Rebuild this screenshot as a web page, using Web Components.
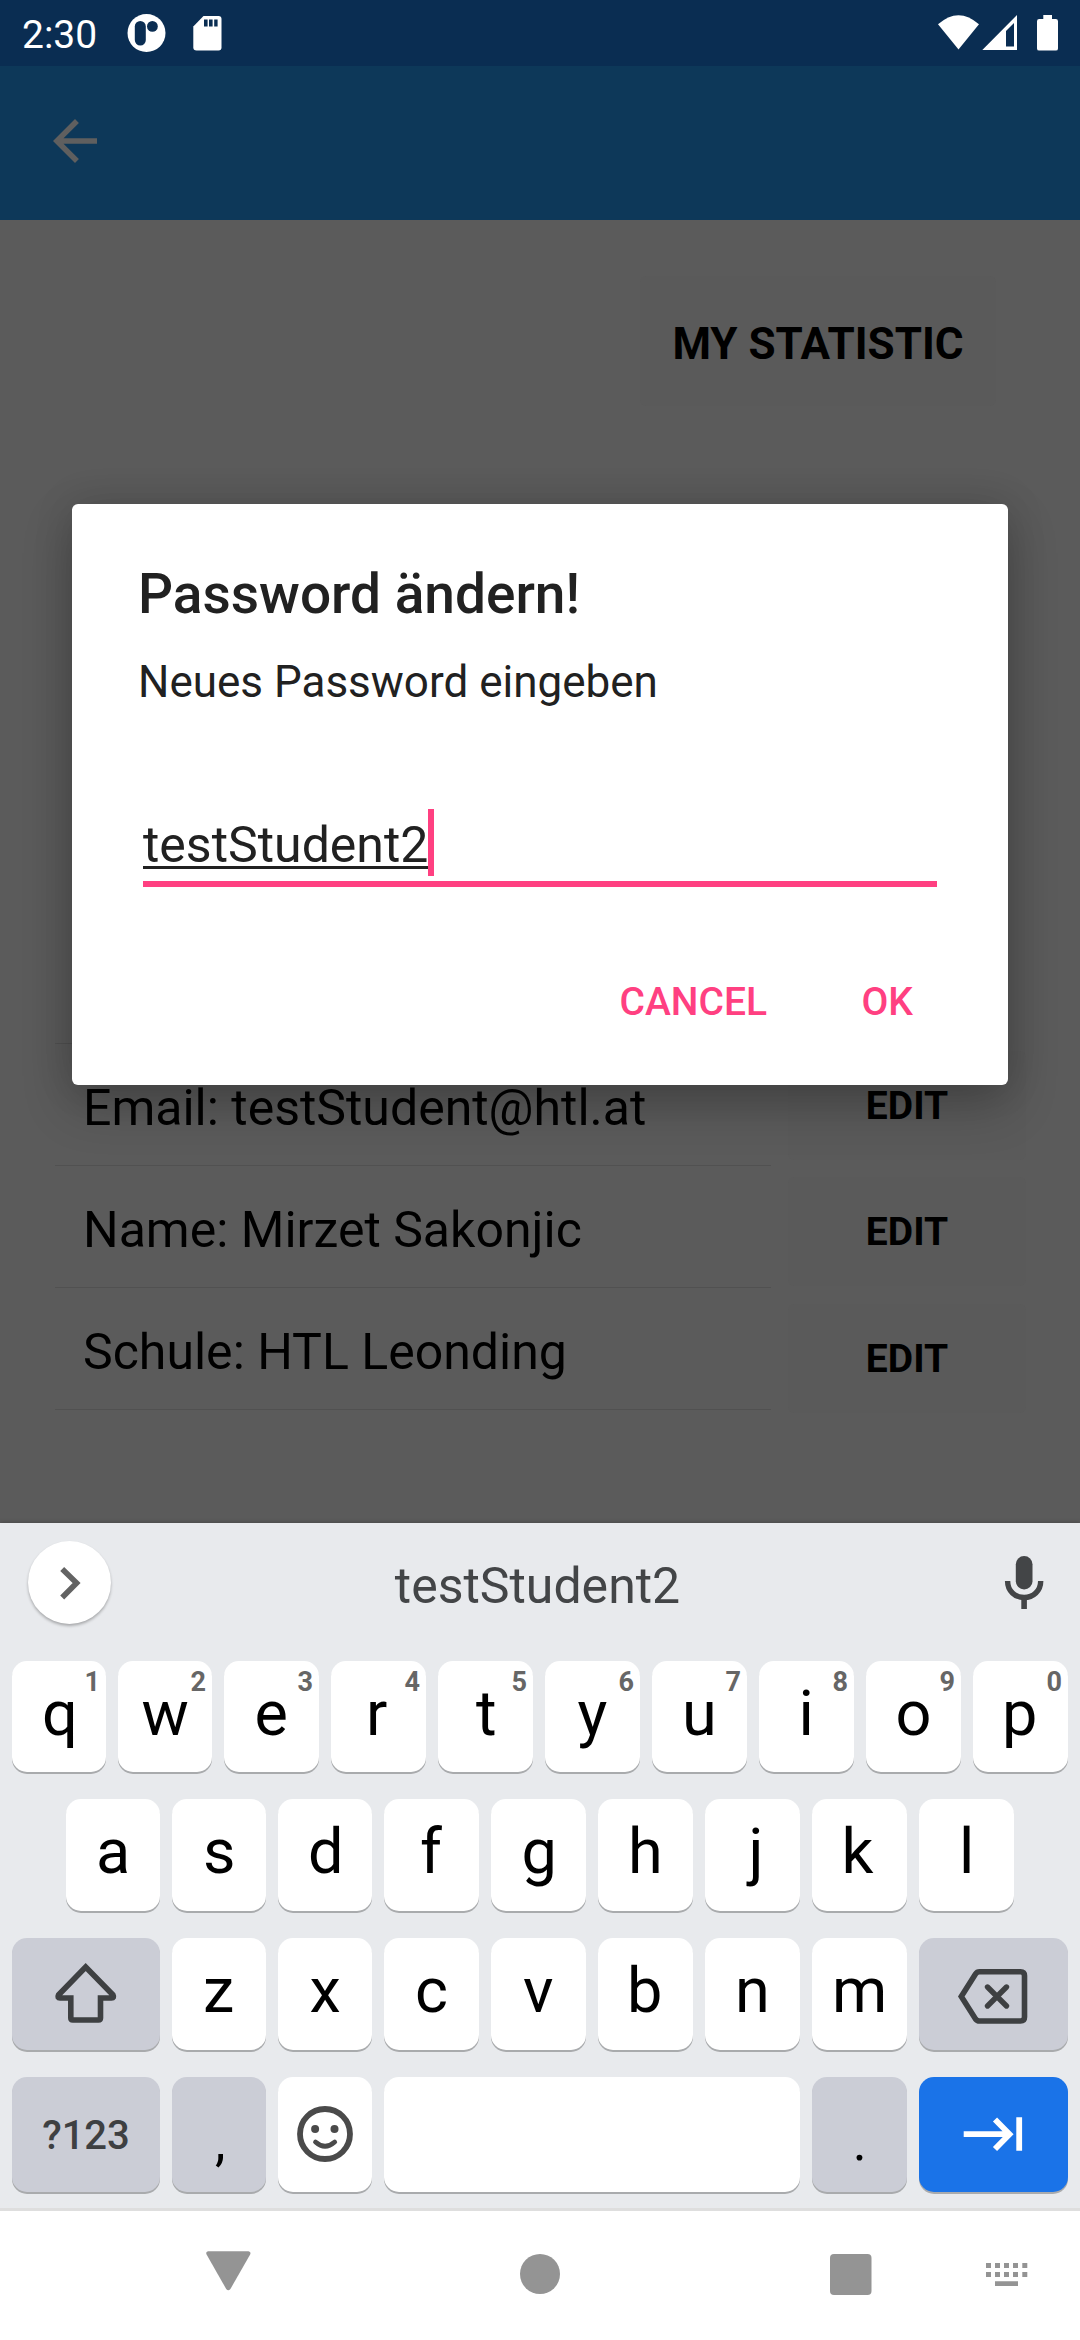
<!DOCTYPE html>
<html lang="de">
<head>
<meta charset="utf-8">
<title>Password ändern</title>
<style>
  html, body { margin: 0; padding: 0; }
  body { width: 1080px; height: 2340px; overflow: hidden; font-family: Roboto, "Liberation Sans", sans-serif; background: #fff; }
</style>
</head>
<body>
<phone-screen></phone-screen>
<script>
const define = (name, html, setup) => {
  const template = document.createElement('template');
  template.innerHTML = '<style>*{box-sizing:border-box}svg{display:block}</style>' + html;
  customElements.define(name, class extends HTMLElement {
    constructor() {
      super();
      this.attachShadow({ mode: 'open' }).appendChild(template.content.cloneNode(true));
    }
    connectedCallback() { if (setup) setup(this, this.shadowRoot); }
  });
};

define('status-bar', `
<style>
  :host { display: flex; height: 66px; background: #0a2d52; color: #fff; align-items: stretch; }
  .time { width: 110px; padding: 2px 0 0 22px; font-size: 39px; line-height: 66px; white-space: nowrap; }
  .space { flex: 1; }
</style>
<div class="time">2:30</div>
<svg width="130" height="66" viewBox="110 0 130 66">
  <circle cx="146.5" cy="33" r="19" fill="#fff"/>
  <rect x="134.8" y="21" width="11" height="24.5" rx="5.5" fill="#0a2d52"/>
  <circle cx="152.4" cy="26.4" r="5.4" fill="#0a2d52"/>
  <path d="M203.5 16H218.500Q221.500 16 221.500 19V47.500Q221.500 50.500 218.500 50.500H196.500Q193.300 50.500 193.300 47.500V26.500Z" fill="#fff"/>
  <path d="M204 19.500h3.600v7h-3.600zM209 19.500h3.600v7h-3.600zM214.200 19.500h3.400v7h-3.400z" fill="#0a2d52"/>
</svg>
<div class="space"></div>
<svg width="160" height="66" viewBox="920 0 160 66">
  <path d="M938 24.300Q958.500 6 979 24.300L958.500 49.500Z" fill="#fff"/>
  <path fill-rule="evenodd" d="M1017 15V50H982.300ZM1014 23L1006 31V46.500H1014Z" fill="#fff"/>
  <path d="M1043.300 15h8.700v4h3.800q2.200 0 2.200 2.200v27.200q0 2.200-2.200 2.200h-16.600q-2.200 0-2.200-2.200v-27.200q0-2.200 2.200-2.200h4.100z" fill="#fff"/>
</svg>`);

define('app-bar', `
<style>
  :host { display: flex; height: 154px; background: #0d3859; padding: 42px 0 0 42px; box-sizing: border-box; }
</style>
<svg width="66" height="66" viewBox="0 0 24 24"><path d="M20 11H7.830l5.590-5.590L12 4l-8 8 8 8 1.410-1.410L7.830 13H20v-2z" fill="#5f5f5f"/></svg>`);

define('flat-button', `
<style>
  :host { display: flex; justify-content: center; background: #5a5a5a; border-radius: 6px; color: #000; font-weight: 700; font-size: 39px; line-height: 111px; height: 109px; white-space: nowrap; }
</style><slot></slot>`);

define('profile-row', `
<style>
  :host { display: block; height: 122px; border-bottom: 1px solid #515151; padding: 6px 0 0 28px; font-size: 50px; line-height: 116px; color: #000; white-space: nowrap; }
</style><slot></slot>`);

define('profile-page', `
<style>
  :host { display: flex; flex-direction: column; height: 1303px; background: #5b5b5b; }
  .top { display: flex; justify-content: flex-end; padding: 56px 84px 0 0; height: 702px; }
  .top flat-button { width: 356px; height: 130px; line-height: 136px; font-size: 44px; }
  .data { display: flex; gap: 17px; padding-left: 55px; }
  .rows { width: 716px; }
  .edits { width: 238px; padding-top: 129px; display: flex; flex-direction: column; gap: 17px; }
  .edits flat-button:last-child { margin-top: 1px; }
</style>
<div class="top"><flat-button>MY STATISTIC</flat-button></div>
<div class="data">
  <div class="rows">
    <profile-row></profile-row>
    <profile-row>Email: testStudent@htl.at</profile-row>
    <profile-row>Name: Mirzet Sakonjic</profile-row>
    <profile-row>Schule: HTL Leonding</profile-row>
  </div>
  <div class="edits">
    <flat-button>EDIT</flat-button>
    <flat-button>EDIT</flat-button>
    <flat-button>EDIT</flat-button>
  </div>
</div>`);

define('password-dialog', `
<style>
  :host { display: flex; flex-direction: column; width: 936px; height: 581px; padding: 0 66px; background: #fff; border-radius: 6px; color: #212121;
    box-shadow: 0 20px 50px rgba(0,0,0,.24), 0 0 40px rgba(0,0,0,.12); }
  .title { padding-top: 50px; font-size: 55px; font-weight: 500; line-height: 80px; height: 130px; white-space: nowrap; }
  .message { font-size: 44px; line-height: 60px; height: 60px; padding-top: 18px; white-space: nowrap; }
  .field { display: flex; height: 78px; margin: 115px 5px 0; border-bottom: 6px solid #ff4081; width: 794px; }
  .value { height: 59.500px; font-size: 50px; line-height: 72px; border-bottom: 3px solid #212121; }
  .caret { width: 6px; height: 67px; background: #ff4081; }
  .actions { display: flex; justify-content: flex-end; margin-top: 85px; gap: 94.500px; padding-right: 29px; color: #ff4081; font-size: 39px; font-weight: 500; line-height: 60px; }
</style>
<div class="title">Password ändern!</div>
<div class="message">Neues Password eingeben</div>
<div class="field"><span class="value">testStudent2</span><span class="caret"></span></div>
<div class="actions"><span>CANCEL</span><span>OK</span></div>`);

// Key labels are centred on their drawn ink rather than on their advance width.
const pen = document.createElement('canvas').getContext('2d');
const inkShift = (text) => {
  pen.font = '63px Roboto, "Liberation Sans", sans-serif';
  const m = pen.measureText(text);
  return m.width - (m.actualBoundingBoxRight - m.actualBoundingBoxLeft);
};

define('key-cap', `
<style>
  :host { display: grid; grid-template: 100% / 100%; background: #fff; border-radius: 15px; box-shadow: 0 2px 0 #a9abad; color: #000; font-size: 63px; height: 112px; width: 95px; flex: none; }
  :host([tone="grey"]) { background: #cbcdd6; }
  :host([tone="blue"]) { background: #1a73e8; }
  .main, .hint { grid-area: 1 / 1; }
  .main { text-align: center; line-height: var(--line, 106px); }
  .hint { justify-self: end; padding: 0 6px 0 0; font-size: 27px; font-weight: 700; line-height: 43px; color: #666; }
</style>
<div class="main"><slot></slot></div><div class="hint"></div>`, (host, root) => {
  root.querySelector('.hint').textContent = host.getAttribute('hint') || '';
  const w = host.getAttribute('w');
  if (w) host.style.width = w + 'px';
  const label = host.textContent.trim();
  if (label.length === 1) root.querySelector('.main').style.textIndent = inkShift(label) + 'px';
});

define('key-row', `
<style>:host { display: flex; gap: 12px; padding: 0 12px; }</style><slot></slot>`);

define('suggestion-strip', `
<style>
  :host { display: flex; height: 138px; justify-content: space-between; align-items: flex-start; }
  .toggle { width: 83px; height: 83px; margin: 18px 0 0 28px; border-radius: 50%; background: #fff; box-shadow: 0 2px 3px rgba(0,0,0,.28); }
  .word { font-size: 50px; line-height: 126px; color: #434547; padding-left: 22px; }
</style>
<div class="toggle"><svg width="83" height="83" viewBox="28 1541 83 83"><path d="M62.200 1569L76.600 1583L62.200 1597.400" fill="none" stroke="#636363" stroke-width="5.6"/></svg></div>
<div class="word">testStudent2</div>
<svg width="138" height="138" viewBox="942 1523 138 138">
  <rect x="1015.800" y="1556" width="16.700" height="33.500" rx="8.350" fill="#434547"/>
  <path d="M1007.600 1581C1007.600 1591 1015 1597.500 1024.100 1597.500S1040.700 1591 1040.700 1581" fill="none" stroke="#434547" stroke-width="5.400"/>
  <path d="M1021.300 1597h5.600v12h-5.600z" fill="#434547"/>
</svg>`);

define('soft-keyboard', `
<style>
  :host { display: flex; flex-direction: column; height: 688px; background: #e8eaed; border-bottom: 3px solid #dedede; box-shadow: 0 -1px 4px rgba(0,0,0,.2); }
  .r1 { height: 138px; } .r1 key-cap { height: 111px; }
  .r2 { height: 139px; padding-left: 66px; }
  .r3 { height: 139px; }
  .r4 key-cap { height: 115px; }
  .punct { font-size: 53px; --line: 131px; }
  .sym { font-size: 40px; font-weight: 500; color: #3e4042; --line: 118px; }
</style>
<suggestion-strip></suggestion-strip>
<key-row class="r1"></key-row>
<key-row class="r2"></key-row>
<key-row class="r3">
  <key-cap tone="grey" w="148"><svg width="148" height="112" viewBox="12 1938 148 112"><path d="M85.700 1967L58.500 1995Q57 1998 60 1998H70.800V2018Q70.800 2020 72.800 2020H98.500Q100.500 2020 100.500 2018V1998H111.500Q114.500 1998 113 1995Z" fill="none" stroke="#3e4042" stroke-width="5.600"/></svg></key-cap>
  <key-cap w="94">z</key-cap><key-cap w="94">x</key-cap><key-cap>c</key-cap><key-cap>v</key-cap><key-cap>b</key-cap><key-cap>n</key-cap><key-cap>m</key-cap>
  <key-cap tone="grey" w="149"><svg width="149" height="112" viewBox="919 1938 149 112"><path d="M961.300 1996.500L975.500 1974Q977 1971.800 979.500 1971.800H1020.500Q1024.500 1971.800 1024.500 1975.800V2017Q1024.500 2021 1020.500 2021H979.500Q977 2021 975.500 2019Z" fill="none" stroke="#3e4042" stroke-width="5.600"/><path d="M987.500 1987L1006.500 2006M1006.500 1987L987.500 2006" fill="none" stroke="#3e4042" stroke-width="5.400" stroke-linecap="round"/></svg></key-cap>
</key-row>
<key-row class="r4">
  <key-cap class="sym" tone="grey" w="148">?123</key-cap>
  <key-cap class="punct" tone="grey" w="94">,</key-cap>
  <key-cap w="94"><svg width="94" height="115" viewBox="278 2077 94 115"><circle cx="325" cy="2134" r="25" fill="none" stroke="#4a4a4a" stroke-width="5.800"/><circle cx="315.100" cy="2129" r="4" fill="#4a4a4a"/><circle cx="334.500" cy="2129" r="4" fill="#4a4a4a"/><path d="M315.500 2142Q325 2150.500 334.700 2142" fill="none" stroke="#4a4a4a" stroke-width="4.800" stroke-linecap="round"/></svg></key-cap>
  <key-cap w="416"></key-cap>
  <key-cap class="punct" tone="grey">.</key-cap>
  <key-cap tone="blue" w="149"><svg width="149" height="115" viewBox="919 2077 149 115"><path d="M963.700 2134.200H1009M995 2119.500L1009.500 2134.200L995 2149M1019.200 2117.200V2150.800" fill="none" stroke="#fff" stroke-width="5.800"/></svg></key-cap>
</key-row>`, (host, root) => {
  const fill = (selector, letters, narrow, hints) => {
    root.querySelector(selector).innerHTML = [...letters].map((c, i) =>
      `<key-cap w="${i < narrow ? 94 : 95}"${hints ? ` hint="${hints[i]}"` : ''}>${c}</key-cap>`).join('');
  };
  fill('.r1', 'qwertyuiop', 2, '1234567890');
  fill('.r2', 'asdfghjkl', 3);
});

define('nav-bar', `
<style>:host { display: flex; justify-content: space-around; height: 129px; background: #fff; }</style>
<svg width="1080" height="129" viewBox="0 2211 1080 129" fill="#949494">
  <path d="M208 2251.200H248.500Q251.500 2251.800 250 2254.800L230.400 2289Q228.300 2291.500 226.200 2289L206.700 2254.800Q205.200 2251.800 208 2251.200Z"/>
  <circle cx="540" cy="2274" r="20"/>
  <rect x="830" y="2254" width="41.500" height="41" rx="4"/>
  <path d="M986 2263h5v5h-5zM995 2263h5v5h-5zM1004 2263h5v5h-5zM1013 2263h5v5h-5zM1022.300 2263h5v5h-5zM986 2272h5v5h-5zM995 2272h5v5h-5zM1004 2272h5v5h-5zM1013 2272h5v5h-5zM1022.300 2272h5v5h-5zM995 2281.300h23v4.700h-23z"/>
</svg>`);

define('phone-screen', `
<style>
  :host { display: flex; flex-direction: column; position: relative; width: 1080px; height: 2340px; overflow: hidden; }
  password-dialog { position: absolute; left: 72px; top: 504px; }
</style>
<status-bar></status-bar>
<app-bar></app-bar>
<profile-page></profile-page>
<soft-keyboard></soft-keyboard>
<nav-bar></nav-bar>
<password-dialog></password-dialog>`);
</script>
</body>
</html>
